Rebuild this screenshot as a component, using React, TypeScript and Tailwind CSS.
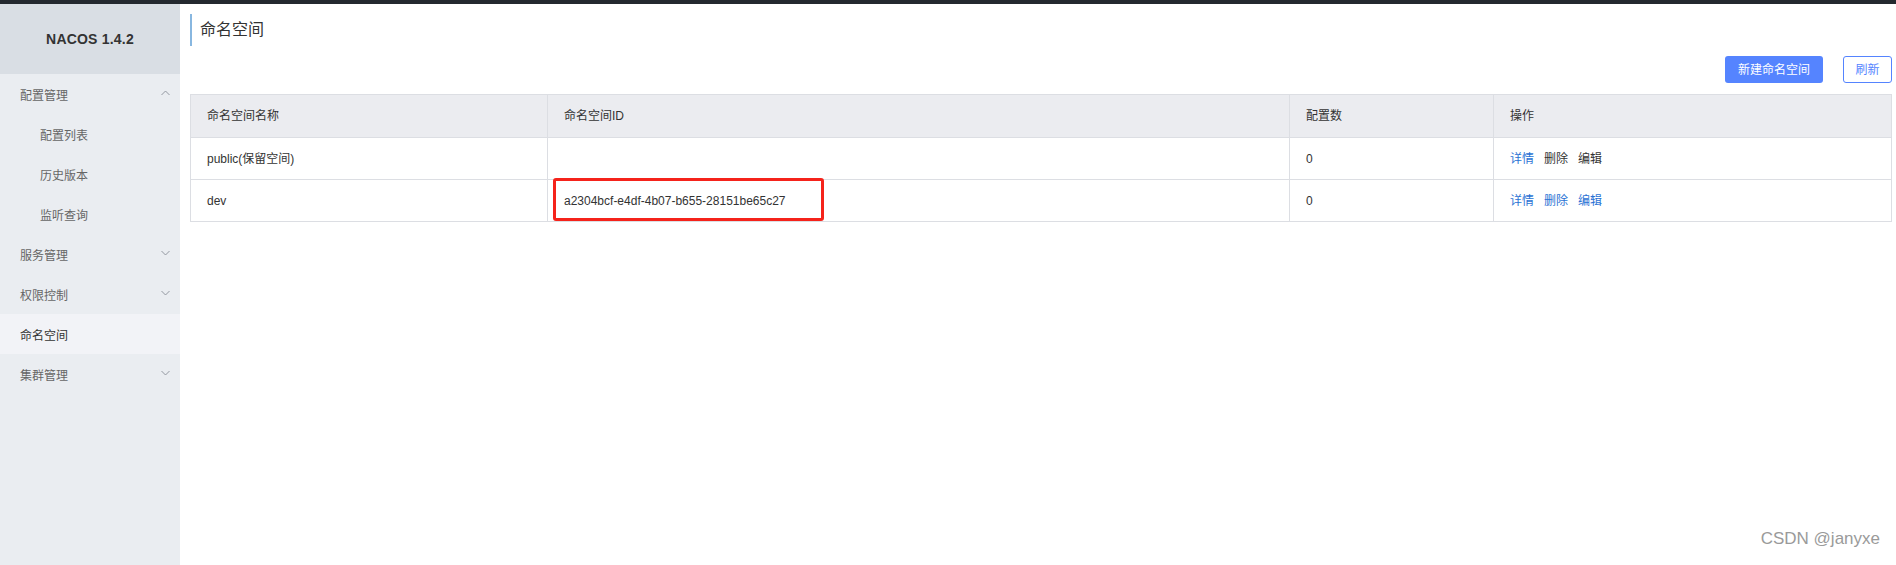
import React from 'react'

interface MenuItem {
  label: string
  level: 1 | 2
  chevron?: 'up' | 'down'
  active?: boolean
}

const menu: MenuItem[] = [
  { label: '配置管理', level: 1, chevron: 'up' },
  { label: '配置列表', level: 2 },
  { label: '历史版本', level: 2 },
  { label: '监听查询', level: 2 },
  { label: '服务管理', level: 1, chevron: 'down' },
  { label: '权限控制', level: 1, chevron: 'down' },
  { label: '命名空间', level: 1, active: true },
  { label: '集群管理', level: 1, chevron: 'down' },
]

interface Row {
  name: string
  id: string
  count: number
  linksBlue: boolean
}

const rows: Row[] = [
  { name: 'public(保留空间)', id: '', count: 0, linksBlue: false },
  { name: 'dev', id: 'a2304bcf-e4df-4b07-b655-28151be65c27', count: 0, linksBlue: true },
]

function Chevron({ dir }: { dir: 'up' | 'down' }) {
  return (
    <svg width="9" height="6" viewBox="0 0 9 6" className="text-[#8a8f99]">
      <path
        d={dir === 'up' ? 'M0.5 5L4.5 1L8.5 5' : 'M0.5 1L4.5 5L8.5 1'}
        fill="none"
        stroke="currentColor"
        strokeWidth="0.9"
      />
    </svg>
  )
}

function Sidebar() {
  return (
    <aside className="w-[180px] shrink-0 bg-[#eaedf1] flex flex-col">
      <div className="h-[70px] bg-[#d9dee4] flex items-center justify-center">
        <h1 className="text-[14px] font-bold text-[#333] tracking-[0.2px]">NACOS 1.4.2</h1>
      </div>
      <nav className="flex flex-col">
        {menu.map((item) => (
          <div
            key={item.label}
            className={`h-10 flex items-center justify-between pr-[10px] pt-[3px] text-[12px] ${
              item.level === 2 ? 'pl-10' : 'pl-5'
            } ${item.active ? 'bg-[#f2f3f7] text-[#333]' : 'text-[#666]'}`}
          >
            <span>{item.label}</span>
            {item.chevron && (
              <span className="-mt-[6px]">
                <Chevron dir={item.chevron} />
              </span>
            )}
          </div>
        ))}
      </nav>
    </aside>
  )
}

export default function App() {
  return (
    <div
      className="relative w-full h-[565px] flex flex-col bg-white overflow-hidden"
      style={{ fontFamily: '"Liberation Sans", "Noto Sans CJK SC", sans-serif' }}
    >
      <div className="h-1 bg-[#24292f] shrink-0" />
      <div className="flex flex-1 min-h-0">
        <Sidebar />
        <main className="flex-1 pl-[10px] pr-[4px]">
          <div className="mt-[10px] h-8 flex items-center border-l-2 border-[#88b7e0] pl-2">
            <span className="text-[16px] text-[#333]">命名空间</span>
          </div>
          <div className="mt-[10px] flex justify-end gap-5">
            <button className="h-[27px] w-[98px] rounded-[3px] bg-[#5584ff] text-white text-[12px]">
              新建命名空间
            </button>
            <button className="h-[27px] w-[49px] rounded-[3px] border border-[#5584ff] bg-white text-[#5584ff] text-[12px]">
              刷新
            </button>
          </div>
          <table className="mt-[11px] w-full border-collapse border border-[#dcdee3] text-[12px] text-[#333] table-fixed">
            <colgroup>
              <col className="w-[357px]" />
              <col className="w-[742px]" />
              <col className="w-[204px]" />
              <col />
            </colgroup>
            <thead>
              <tr className="h-[43px] bg-[#ebecf0]">
                {['命名空间名称', '命名空间ID', '配置数', '操作'].map((h) => (
                  <th key={h} className="border border-[#dcdee3] px-4 text-left font-normal">
                    {h}
                  </th>
                ))}
              </tr>
            </thead>
            <tbody>
              {rows.map((r) => (
                <tr key={r.name} className="h-[42px]">
                  <td className="border border-[#dcdee3] px-4">{r.name}</td>
                  <td className="relative border border-[#dcdee3] px-4">
                    {r.id}
                    {r.id && (
                      <div className="absolute left-[5px] top-[-2px] w-[271px] h-[43px] border-[3px] border-[#f5231b] rounded-[3px]" />
                    )}
                  </td>
                  <td className="border border-[#dcdee3] px-4">{r.count}</td>
                  <td className="border border-[#dcdee3] px-4">
                    <span className="text-[#2a72d4]">详情</span>
                    <span className={`ml-[10px] ${r.linksBlue ? 'text-[#2a72d4]' : 'text-[#333]'}`}>删除</span>
                    <span className={`ml-[10px] ${r.linksBlue ? 'text-[#2a72d4]' : 'text-[#333]'}`}>编辑</span>
                  </td>
                </tr>
              ))}
            </tbody>
          </table>
        </main>
      </div>
      <div className="absolute right-[16px] bottom-[14px] text-[17px] text-[#9a9a9a] font-['Liberation_Sans',sans-serif]">
        CSDN @janyxe
      </div>
    </div>
  )
}
